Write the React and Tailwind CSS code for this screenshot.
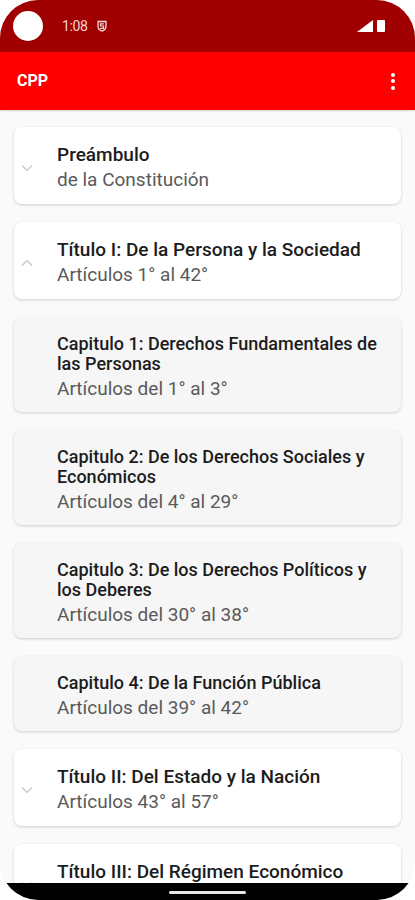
import React from 'react';

const items = [
    { kind: 'title', title: 'Preámbulo', sub: 'de la Constitución', icon: 'down' },
    { kind: 'title', title: 'Título I: De la Persona y la Sociedad', sub: 'Artículos 1° al 42°', icon: 'up' },
    { kind: 'chapter', title: 'Capitulo 1: Derechos Fundamentales de las Personas', sub: 'Artículos del 1° al 3°' },
    { kind: 'chapter', title: 'Capitulo 2: De los Derechos Sociales y Económicos', sub: 'Artículos del 4° al 29°' },
    { kind: 'chapter', title: 'Capitulo 3: De los Derechos Políticos y los Deberes', sub: 'Artículos del 30° al 38°' },
    { kind: 'chapter', title: 'Capitulo 4: De la Función Pública', sub: 'Artículos del 39° al 42°' },
    { kind: 'title', title: 'Título II: Del Estado y la Nación', sub: 'Artículos 43° al 57°', icon: 'down' },
    { kind: 'title', title: 'Título III: Del Régimen Económico', sub: 'Artículos 58° al 65°', icon: 'down' },
];

function Chevron({ dir }) {
    return (
        <svg width="12" height="8" viewBox="0 0 12 8" className="shrink-0">
            {dir === 'up'
                ? <path d="M1 6.5 L6 1.5 L11 6.5" fill="none" stroke="#c4c4c4" strokeWidth="1.2" />
                : <path d="M1 1.5 L6 6.5 L11 1.5" fill="none" stroke="#c4c4c4" strokeWidth="1.2" />}
        </svg>
    );
}

function StatusBar() {
    return (
        <div className="h-[52px] bg-[#a10000] flex items-center px-[13px] shrink-0">
            <div className="w-[30px] h-[30px] rounded-full bg-white" />
            <span className="ml-[19px] text-[14px] text-[#f3d6d6] tracking-tight">1:08</span>
            {/* shield-ish S icon */}
            <svg width="10" height="12" viewBox="0 0 10 12" className="ml-[9px]">
                <path d="M1 1.5 H9 V6 Q9 10 5 11 Q1 10 1 6 Z" fill="none" stroke="#f3d6d6" strokeWidth="1.3" />
                <path d="M6.8 3.8 H3.5 V6 H6.5 V8.4 H3.2" fill="none" stroke="#f3d6d6" strokeWidth="1.2" />
            </svg>
            <div className="ml-auto flex items-center gap-[4px] mr-[17px]">
                <svg width="16" height="12" viewBox="0 0 16 12">
                    <path d="M16 0 V12 H0 Z" fill="#ffffff" />
                </svg>
                <div className="w-[8px] h-[12px] bg-white rounded-[1px]" />
            </div>
        </div>
    );
}

function AppBar() {
    return (
        <div className="h-[58px] bg-[#ff0000] flex items-center justify-between pl-[17px] pr-[20px] shrink-0 shadow-[0_1px_2px_rgba(0,0,0,0.15)] relative z-10">
            <span className="text-white font-bold text-[16px]">CPP</span>
            <div className="flex flex-col gap-[2.5px] items-center">
                <span className="w-[4px] h-[4px] rounded-full bg-white" />
                <span className="w-[4px] h-[4px] rounded-full bg-white" />
                <span className="w-[4px] h-[4px] rounded-full bg-white" />
            </div>
        </div>
    );
}

function Card({ item }) {
    const chapter = item.kind === 'chapter';
    return (
        <div className={`rounded-[8px] shadow-[0_1px_3px_rgba(0,0,0,0.18)] flex items-center pt-[17px] pr-[8px] ${chapter ? 'bg-[#f6f6f6] pb-[12px]' : 'bg-white pb-[13px]'}`}>
            <div className="w-[43px] flex justify-start pl-[7px]">
                {item.icon && <Chevron dir={item.icon} />}
            </div>
            <div className="flex-1 min-w-0">
                <div className={`font-medium text-[#1c1c1c] ${chapter ? 'text-[18px] leading-[20px]' : 'text-[19px] leading-[21px]'}`}>{item.title}</div>
                <div className="text-[19px] leading-[22px] mt-[4px] text-[#5a5a5a]">{item.sub}</div>
            </div>
        </div>
    );
}

export default function App() {
    return (
        <div className="w-[415px] h-[900px] bg-white" style={{ fontFamily: 'Roboto, "Noto Sans", sans-serif' }}>
            <div className="w-full h-full rounded-[38px] overflow-hidden flex flex-col">
                <StatusBar />
                <AppBar />
                <div className="flex-1 bg-[#fafafa] overflow-hidden">
                    <div className="pt-[17px] px-[14px] flex flex-col gap-[18px]">
                        {items.map((item, i) => (
                            <Card key={i} item={item} />
                        ))}
                    </div>
                </div>
                <div className="h-[17px] bg-black flex items-center justify-center shrink-0">
                    <div className="w-[77px] h-[3px] rounded-full bg-[#e8e8e8] mt-[2px]" />
                </div>
            </div>
        </div>
    );
}
